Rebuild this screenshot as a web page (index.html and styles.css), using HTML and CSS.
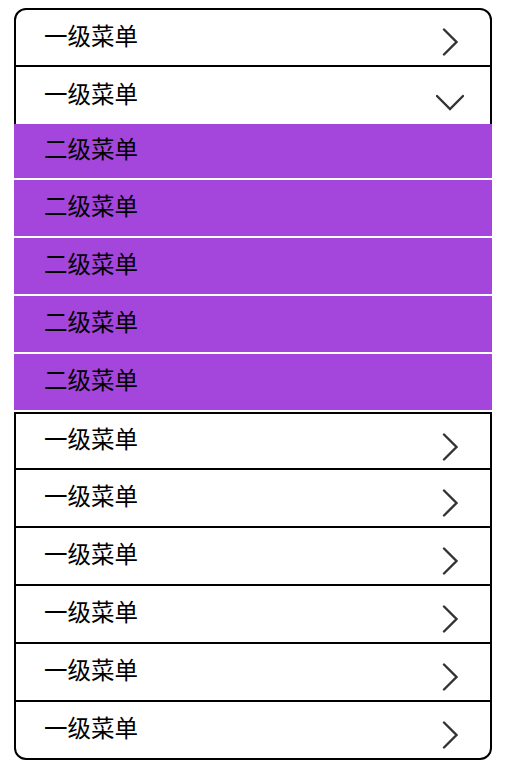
FILE: index.html
```html
<!DOCTYPE html>
<html lang="zh-CN">
<head>
<meta charset="utf-8">
<link rel="stylesheet" href="styles.css">
<title>菜单</title>
</head>
<body>
<div class="menu">
  <div class="item item-top">
    <span class="label">一级菜单</span>
    <svg class="icon icon-right" viewBox="0 0 28 28"><path d="M8 1.5 L20.5 14 L8 26.5"/></svg>
  </div>
  <div class="item item-open">
    <span class="label">一级菜单</span>
    <svg class="icon icon-down" viewBox="0 0 28 28"><path d="M1 7 L14 20 L27 7"/></svg>
  </div>
  <div class="sub">
    <div class="sub-item"><span class="label">二级菜单</span></div>
    <div class="sub-item"><span class="label">二级菜单</span></div>
    <div class="sub-item"><span class="label">二级菜单</span></div>
    <div class="sub-item"><span class="label">二级菜单</span></div>
    <div class="sub-item"><span class="label">二级菜单</span></div>
  </div>
  <div class="item item-rest">
    <span class="label">一级菜单</span>
    <svg class="icon icon-right" viewBox="0 0 28 28"><path d="M8 1.5 L20.5 14 L8 26.5"/></svg>
  </div>
  <div class="item item-rest">
    <span class="label">一级菜单</span>
    <svg class="icon icon-right" viewBox="0 0 28 28"><path d="M8 1.5 L20.5 14 L8 26.5"/></svg>
  </div>
  <div class="item item-rest">
    <span class="label">一级菜单</span>
    <svg class="icon icon-right" viewBox="0 0 28 28"><path d="M8 1.5 L20.5 14 L8 26.5"/></svg>
  </div>
  <div class="item item-rest">
    <span class="label">一级菜单</span>
    <svg class="icon icon-right" viewBox="0 0 28 28"><path d="M8 1.5 L20.5 14 L8 26.5"/></svg>
  </div>
  <div class="item item-rest">
    <span class="label">一级菜单</span>
    <svg class="icon icon-right" viewBox="0 0 28 28"><path d="M8 1.5 L20.5 14 L8 26.5"/></svg>
  </div>
  <div class="item item-rest">
    <span class="label">一级菜单</span>
    <svg class="icon icon-right" viewBox="0 0 28 28"><path d="M8 1.5 L20.5 14 L8 26.5"/></svg>
  </div>
</div>
</body>
</html>
```
FILE: styles.css
```css
* { box-sizing: border-box; }
html, body { background: #fff; }
body {
  margin: 0;
  font-family: "Noto Sans CJK SC", "Noto Sans", sans-serif;
  color: #000;
}
.menu {
  margin: 8px 14px;
  border: 2px solid #000;
  border-radius: 12px;
  display: flex;
  flex-direction: column;
}
.item {
  display: flex;
  align-items: center;
  justify-content: space-between;
  padding: 0 26px 0 28px;
  font-size: 23.5px;
  line-height: 1;
}
.item-top {
  height: 57px;
  border-bottom: 2px solid #000;
}
.item-open {
  height: 57px;
}
.item-rest {
  height: 58px;
  border-top: 2px solid #000;
}
.sub + .item-rest {
  height: 56px;
}
.label {
  display: block;
  margin-bottom: 4px;
}
.icon {
  width: 28px;
  height: 28px;
  align-self: flex-start;
  fill: none;
  stroke: #333;
  stroke-width: 2.4;
  stroke-linecap: round;
  stroke-linejoin: miter;
}
.item-top .icon { margin-top: 18px; }
.item-rest .icon { margin-top: 19px; }
.item-open .icon { margin-top: 22px; }
.sub {
  margin: 0 -2px;
  display: flex;
  flex-direction: column;
}
.sub-item {
  height: 58px;
  display: flex;
  align-items: center;
  padding-left: 30px;
  background: #a445dc;
  border-bottom: 2px solid #fff;
  font-size: 23.5px;
  line-height: 1;
}
.sub-item:first-child {
  height: 56px;
}
```
